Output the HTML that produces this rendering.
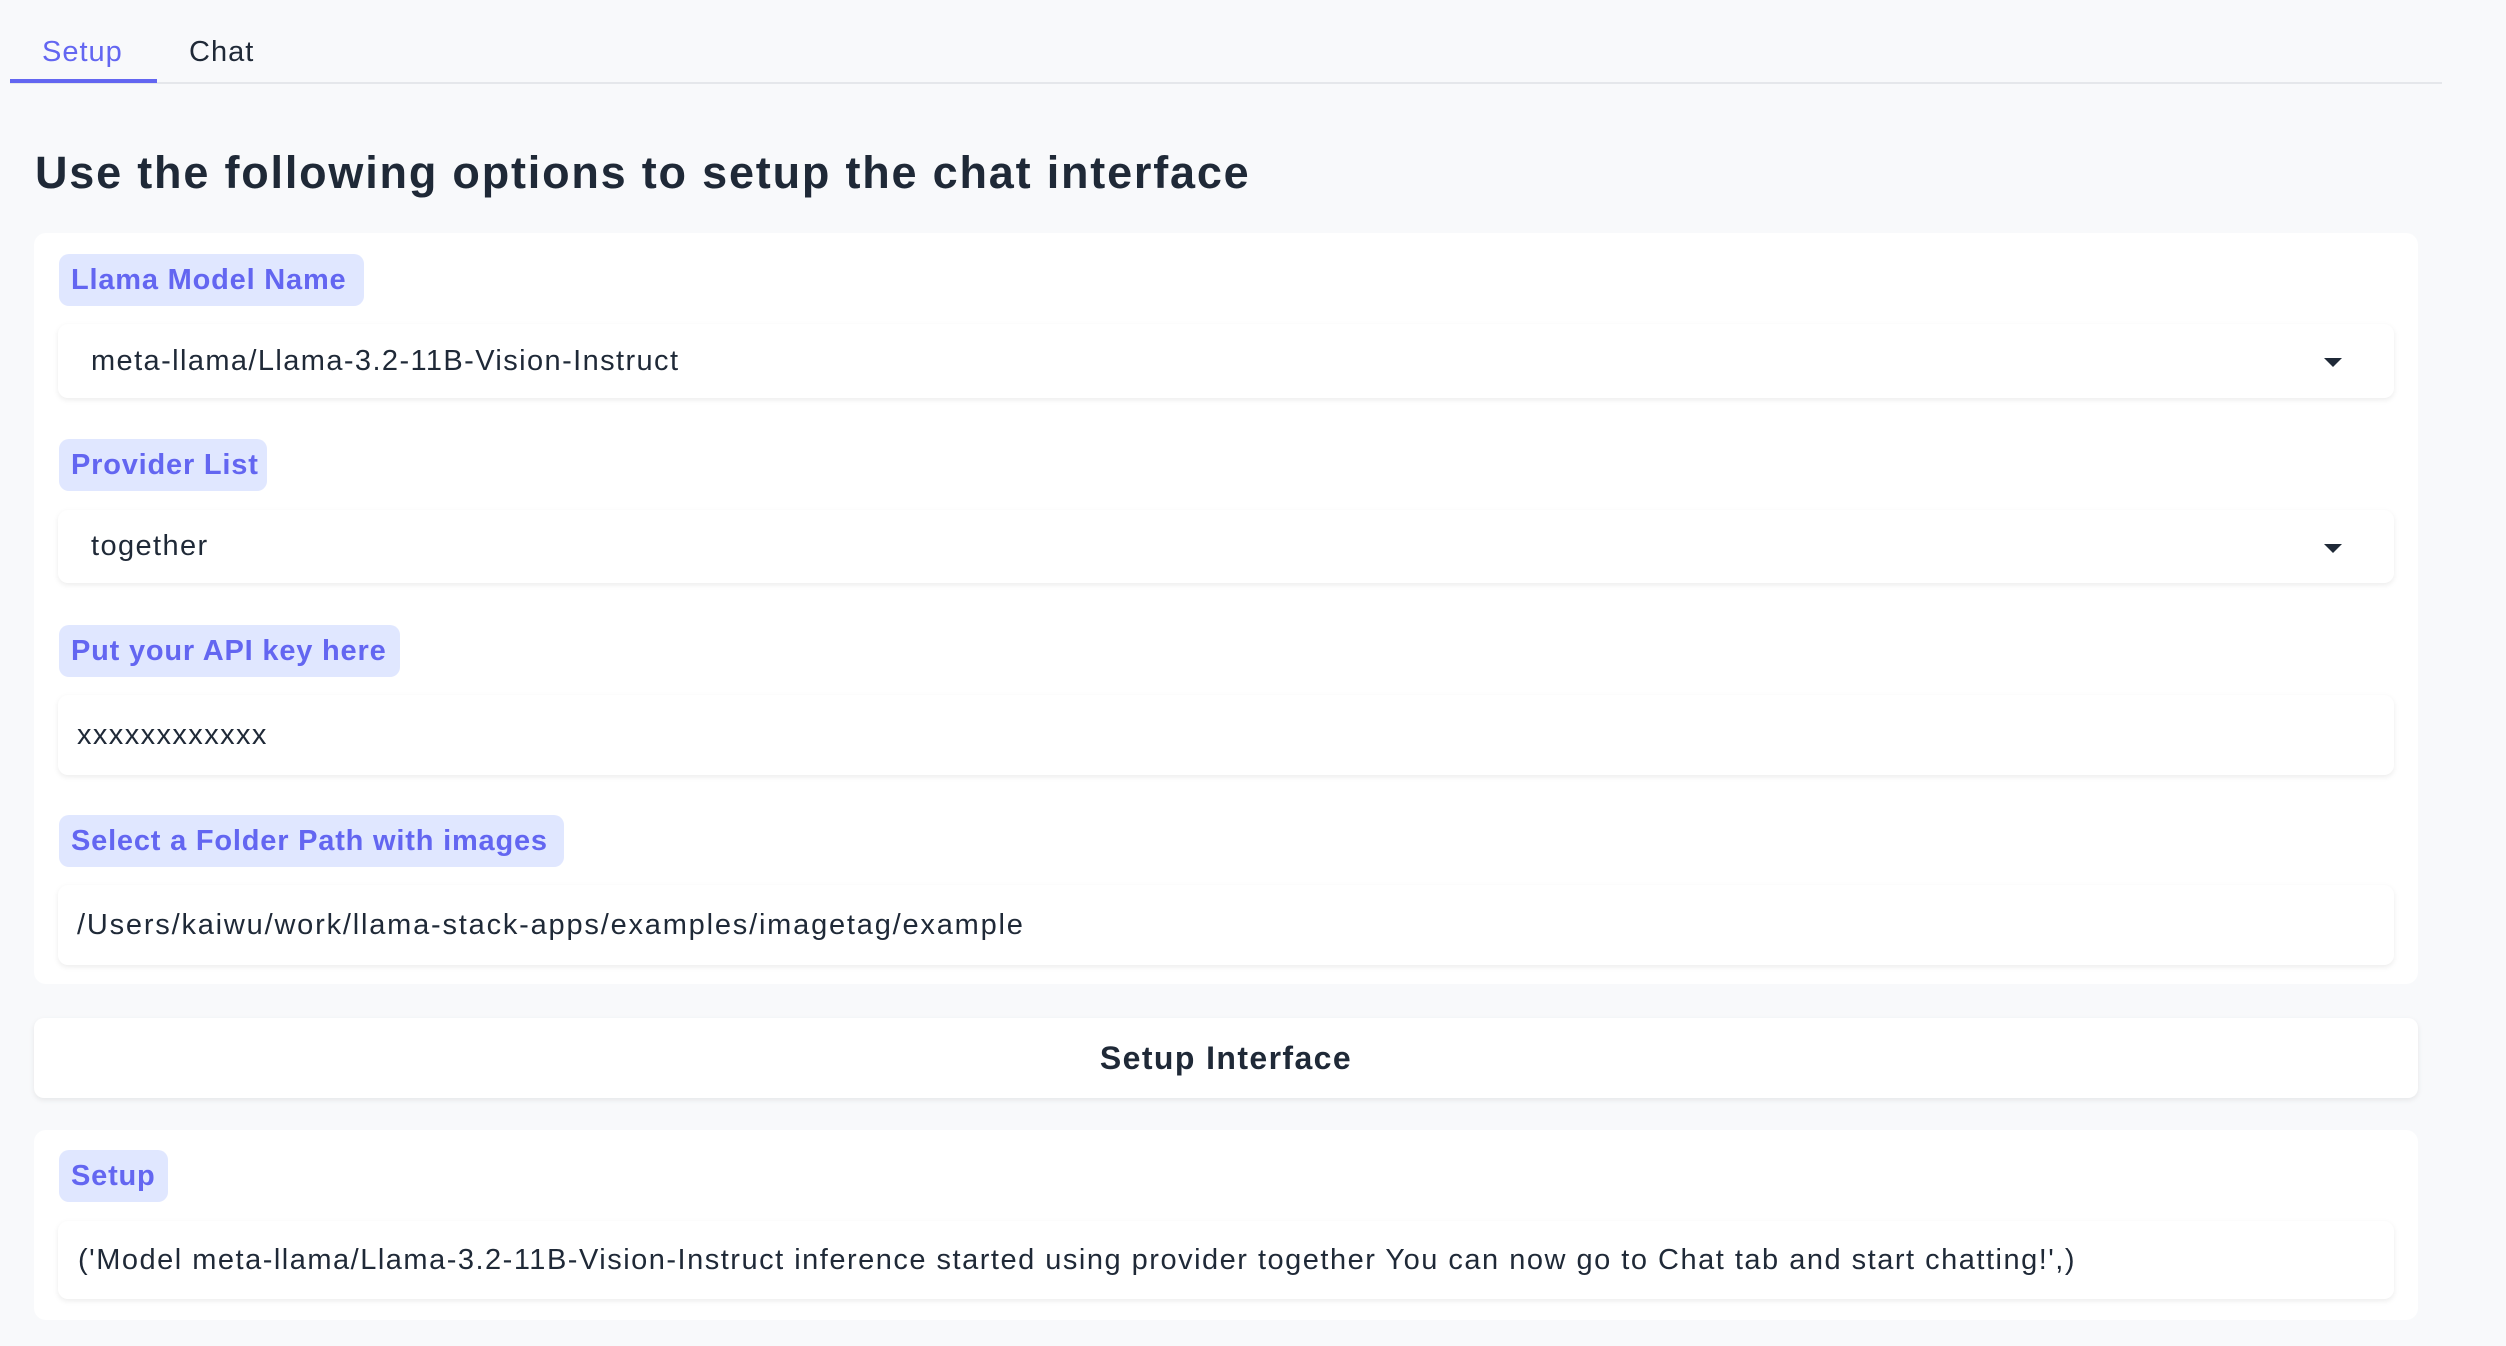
<!DOCTYPE html>
<html><head><meta charset="utf-8"><style>
*{box-sizing:border-box;margin:0;padding:0}
body{width:2506px;height:1346px;background:#f8f9fb;font-family:"Liberation Sans",sans-serif;color:#1f2937;position:relative;overflow:hidden}
.a{position:absolute}
.tab{font-size:29px;top:36px;letter-spacing:1px}
.panel{background:#fff;border-radius:12px}
.lbl{background:#e0e7ff;color:#6366f1;font-weight:bold;font-size:29px;border-radius:10px;padding-left:12px;line-height:52px;height:52px;letter-spacing:0.8px;white-space:nowrap}
.box{background:#fff;border-radius:10px;box-shadow:0 2px 6px rgba(0,0,0,0.08);font-size:29px;display:flex;align-items:center;letter-spacing:1.4px;white-space:nowrap}
.arr{position:absolute;right:52px;top:34px;width:0;height:0;border-left:9px solid transparent;border-right:9px solid transparent;border-top:9px solid #1f2937}
</style></head><body>
<div class="a tab" style="left:42px;color:#6366f1">Setup</div>
<div class="a tab" style="left:189px;color:#1f2937">Chat</div>
<div class="a" style="left:10px;top:82px;width:2432px;height:2px;background:#e5e7eb"></div>
<div class="a" style="left:10px;top:79px;width:147px;height:4px;background:#6366f1"></div>
<div class="a" style="left:35px;top:147px;font-size:45px;font-weight:bold;color:#1f2937;letter-spacing:1.8px;white-space:nowrap">Use the following options to setup the chat interface</div>

<div class="a panel" style="left:34px;top:233px;width:2384px;height:751px"></div>
<div class="a lbl" style="left:59px;top:254px;width:305px">Llama Model Name</div>
<div class="a box" style="left:58px;top:324px;width:2336px;height:74px;padding-left:33px">meta-llama/Llama-3.2-11B-Vision-Instruct<div class="arr"></div></div>
<div class="a lbl" style="left:59px;top:439px;width:208px">Provider List</div>
<div class="a box" style="left:58px;top:510px;width:2336px;height:73px;padding-left:33px">together<div class="arr"></div></div>
<div class="a lbl" style="left:59px;top:625px;width:341px">Put your API key here</div>
<div class="a box" style="left:58px;top:695px;width:2336px;height:80px;padding-left:19px">xxxxxxxxxxxx</div>
<div class="a lbl" style="left:59px;top:815px;width:505px">Select a Folder Path with images</div>
<div class="a box" style="left:58px;top:885px;width:2336px;height:80px;padding-left:19px;letter-spacing:1.8px">/Users/kaiwu/work/llama-stack-apps/examples/imagetag/example</div>

<div class="a box" style="left:34px;top:1018px;width:2384px;height:80px;justify-content:center;font-weight:bold;font-size:32px">Setup Interface</div>

<div class="a panel" style="left:34px;top:1130px;width:2384px;height:190px"></div>
<div class="a lbl" style="left:59px;top:1150px;width:109px">Setup</div>
<div class="a box" style="left:58px;top:1221px;width:2336px;height:78px;padding-left:20px;letter-spacing:1.5px">('Model meta-llama/Llama-3.2-11B-Vision-Instruct inference started using provider together You can now go to Chat tab and start chatting!',)</div>
</body></html>
